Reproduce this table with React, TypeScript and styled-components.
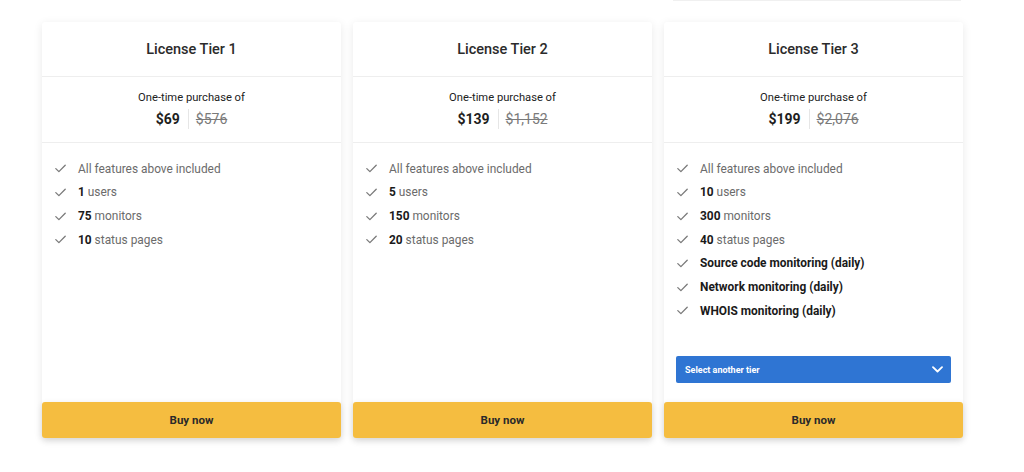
import React from "react";
import styled, { createGlobalStyle } from "styled-components";

const Global = createGlobalStyle`
  html, body { margin: 0; padding: 0; background: #fff; }
  body { font-family: Roboto, "Liberation Sans", Arial, sans-serif; -webkit-font-smoothing: antialiased; }
  * { box-sizing: border-box; }
`;

const Page = styled.div`
  width: 1024px;
  height: 472px;
  overflow: hidden;
  display: flex;
  flex-direction: column;
`;

const TopEdge = styled.div`
  height: 1px;
  margin-left: 673px;
  width: 288px;
  background: #f0f0f0;
`;

const Row = styled.div`
  display: flex;
  gap: 12px;
  padding: 21px 0 0 42px;
`;

const Card = styled.div`
  width: 299px;
  height: 416px;
  background: #fff;
  border-radius: 3px;
  box-shadow: 0 2px 10px rgba(0, 0, 0, 0.09);
  display: flex;
  flex-direction: column;
`;

const Header = styled.div`
  height: 55px;
  padding-top: 1px;
  display: flex;
  align-items: center;
  justify-content: center;
  border-bottom: 1px solid #eeeeee;
  font-size: 14.5px;
  font-weight: 500;
  color: #2b2b2b;
`;

const PriceBox = styled.div`
  height: 66px;
  display: flex;
  flex-direction: column;
  align-items: center;
  justify-content: center;
  gap: 2px;
  border-bottom: 1px solid #eeeeee;
`;

const PriceLabel = styled.div`
  font-size: 11.2px;
  color: #222;
  line-height: 16px;
`;

const PriceLine = styled.div`
  display: flex;
  align-items: center;
  line-height: 22px;
  font-size: 14px;
`;

const Now = styled.span`
  font-weight: 700;
  color: #1e1e1e;
`;

const Sep = styled.span`
  width: 1px;
  height: 20px;
  background: #e6e6e6;
  margin: 0 7px 0 8px;
`;

const Was = styled.span`
  color: #7a7a7a;
  text-decoration: line-through;
`;

const Features = styled.ul`
  list-style: none;
  margin: 0;
  padding: 14px 0 0 12px;
  flex: 1;
`;

const Feature = styled.li<{ $strong?: boolean }>`
  height: 23.67px;
  display: flex;
  align-items: center;
  font-size: 11.9px;
  color: ${(p) => (p.$strong ? "#1a1a1a" : "#6b6b6b")};
  font-weight: ${(p) => (p.$strong ? 700 : 400)};
  b { color: #1a1a1a; font-weight: 700; }
`;

const CheckWrap = styled.span`
  width: 24px;
  display: inline-flex;
  align-items: center;
  padding-left: 1px;
`;

const Select = styled.div`
  margin: 0 12px 19px;
  height: 27px;
  border-radius: 2px;
  background: #2f75d3;
  color: #fff;
  font-size: 9px;
  font-weight: 700;
  display: flex;
  align-items: center;
  justify-content: space-between;
  padding: 0 8px 0 9px;
`;

const Buy = styled.button`
  height: 36px;
  padding-top: 1px;
  border: none;
  border-radius: 3px;
  background: #f5bd40;
  color: #2a2a2a;
  font-family: inherit;
  font-size: 11.5px;
  font-weight: 700;
  box-shadow: 0 2px 6px rgba(0, 0, 0, 0.12);
  cursor: pointer;
`;

const Check = () => (
  <svg width="11" height="9" viewBox="0 0 11 9" fill="none">
    <path d="M0.8 4.6 L3.9 7.6 L10.2 1.2" stroke="#7a7a7a" strokeWidth="1.3" strokeLinecap="round" strokeLinejoin="round" />
  </svg>
);

const Chevron = () => (
  <svg width="11" height="7" viewBox="0 0 11 7" fill="none">
    <path d="M1 1.2 L5.5 5.5 L10 1.2" stroke="#fff" strokeWidth="1.8" strokeLinecap="round" strokeLinejoin="round" />
  </svg>
);

type Item = { b?: string; t: string; strong?: boolean };

const tiers: { n: number; now: string; was: string; items: Item[]; select?: boolean }[] = [
  {
    n: 1, now: "$69", was: "$576",
    items: [
      { t: "All features above included" },
      { b: "1", t: " users" },
      { b: "75", t: " monitors" },
      { b: "10", t: " status pages" },
    ],
  },
  {
    n: 2, now: "$139", was: "$1,152",
    items: [
      { t: "All features above included" },
      { b: "5", t: " users" },
      { b: "150", t: " monitors" },
      { b: "20", t: " status pages" },
    ],
  },
  {
    n: 3, now: "$199", was: "$2,076", select: true,
    items: [
      { t: "All features above included" },
      { b: "10", t: " users" },
      { b: "300", t: " monitors" },
      { b: "40", t: " status pages" },
      { t: "Source code monitoring (daily)", strong: true },
      { t: "Network monitoring (daily)", strong: true },
      { t: "WHOIS monitoring (daily)", strong: true },
    ],
  },
];

export default function App() {
  return (
    <Page>
      <Global />
      <TopEdge />
      <Row>
        {tiers.map((tier) => (
          <Card key={tier.n}>
            <Header>License Tier {tier.n}</Header>
            <PriceBox>
              <PriceLabel>One-time purchase of</PriceLabel>
              <PriceLine>
                <Now>{tier.now}</Now>
                <Sep />
                <Was>{tier.was}</Was>
              </PriceLine>
            </PriceBox>
            <Features>
              {tier.items.map((it, i) => (
                <Feature key={i} $strong={it.strong}>
                  <CheckWrap><Check /></CheckWrap>
                  <span>
                    {it.b && <b>{it.b}</b>}
                    {it.t}
                  </span>
                </Feature>
              ))}
            </Features>
            {tier.select && (
              <Select>
                <span>Select another tier</span>
                <Chevron />
              </Select>
            )}
            <Buy>Buy now</Buy>
          </Card>
        ))}
      </Row>
    </Page>
  );
}
